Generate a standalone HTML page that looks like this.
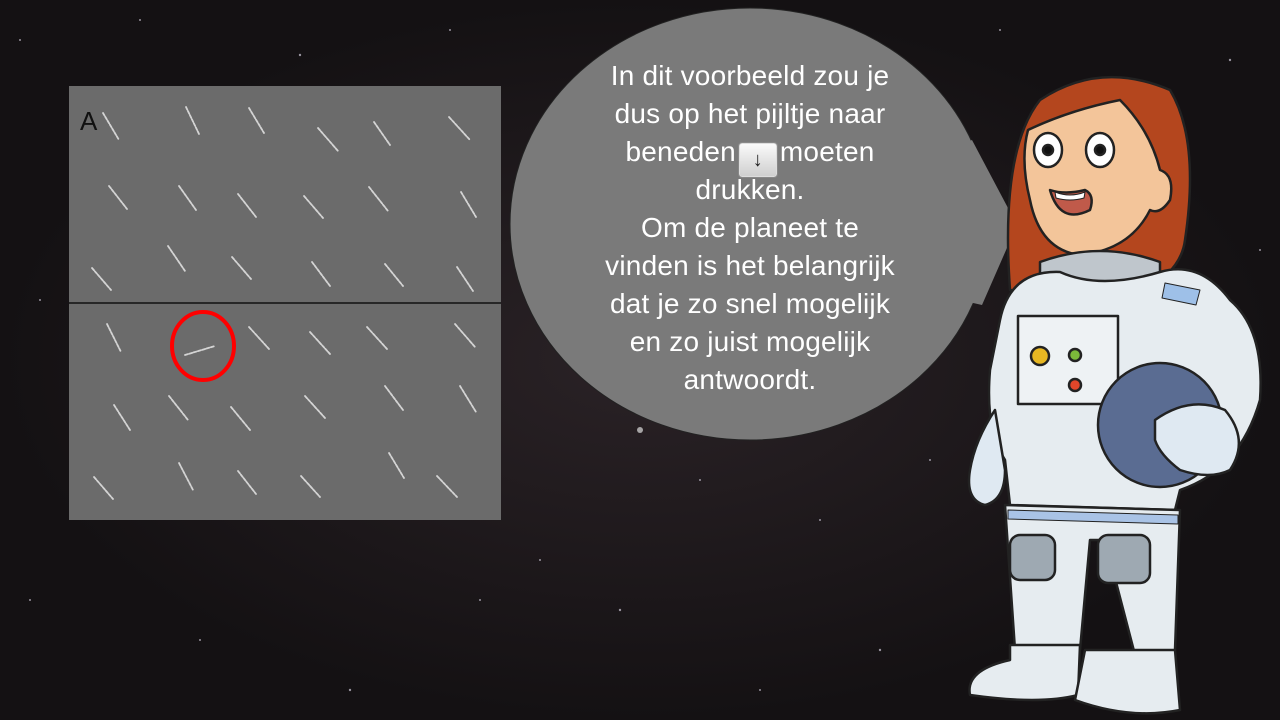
<!DOCTYPE html>
<html><head><meta charset="utf-8"><style>
body{margin:0;width:1280px;height:720px;overflow:hidden;background:#171315;position:relative;font-family:"Liberation Sans",sans-serif}
svg{position:absolute;left:0;top:0}
.t{position:absolute;left:540px;width:420px;top:57px;text-align:center;color:#fff;font-size:28px;line-height:38px;letter-spacing:0.2px}
.t div{height:38px;white-space:nowrap}
.key{display:inline-block;width:38px;height:34px;vertical-align:-5px;background:linear-gradient(#fafafa,#cfcfcf);border:1px solid #ddd;outline:1px solid #888;border-radius:3px;box-sizing:border-box;color:#222;font-size:20px;line-height:32px;margin:0 3px;font-weight:bold}
</style></head><body>
<svg width="1280" height="720">
<defs><radialGradient id="g" cx="0.5" cy="0.5" r="0.5"><stop offset="0" stop-color="#2a2226"/><stop offset="1" stop-color="#141113"/></radialGradient></defs>
<rect width="1280" height="720" fill="url(#g)"/>
<g fill="#cfc9d8" opacity="0.7">
<circle cx="20" cy="40" r="1"/><circle cx="140" cy="20" r="1"/><circle cx="300" cy="55" r="1.2"/><circle cx="450" cy="30" r="1"/><circle cx="540" cy="560" r="1"/><circle cx="620" cy="610" r="1.2"/><circle cx="700" cy="480" r="1"/><circle cx="820" cy="520" r="1"/><circle cx="880" cy="650" r="1.2"/><circle cx="30" cy="600" r="1"/><circle cx="200" cy="640" r="1"/><circle cx="350" cy="690" r="1.2"/><circle cx="480" cy="600" r="1"/><circle cx="760" cy="690" r="1"/><circle cx="930" cy="460" r="1"/><circle cx="1230" cy="60" r="1.2"/><circle cx="1260" cy="250" r="1"/><circle cx="40" cy="300" r="1"/><circle cx="530" cy="180" r="1"/><circle cx="1000" cy="30" r="1"/><circle cx="640" cy="430" r="3" fill="#ddd"/>
</g>
<rect x="69" y="86" width="432" height="434" fill="#6b6b6b"/>
<line x1="69" y1="303" x2="501" y2="303" stroke="#111" stroke-width="1.5"/>
<text x="80" y="130" font-size="26" fill="#111" font-family="Liberation Sans">A</text>
<g stroke="#d4d4d4" stroke-width="1.8" stroke-linecap="round" stroke-dasharray="3 1.5">
<path d="M103 113L119 140M186 107L199 134M249 108L264 133M318 128L338 151M374 122L390 145M449 117L470 140M109 186L127 209M179 186L196 210M238 194L256 217M304 196L323 218M369 187L388 211M461 192L476 217M92 268L111 290M168 246L185 271M232 257L251 279M312 262L330 286M385 264L403 286M457 267L473 291M107 324L121 352M185 355L215 346M249 327L269 349M310 332L330 354M367 327L387 349M455 324L475 347M114 405L130 430M169 396L188 420M231 407L250 430M305 396L325 418M385 386L403 410M460 386L476 412M94 477L113 499M179 463L193 490M238 471L256 494M301 476L320 497M389 453L404 478M437 476L457 497"/>
</g>
<ellipse cx="203" cy="346" rx="31" ry="34" fill="none" stroke="#f00" stroke-width="4"/>
<ellipse cx="750" cy="224" rx="240" ry="216" fill="#7a7a7a" stroke="#222" stroke-width="1"/>
<path d="M972 140 L1017 225 L982 305 L960 300 L960 145Z" fill="#7a7a7a"/>
<g stroke="#222" stroke-width="2.5" stroke-linejoin="round">
<path d="M1010 290 Q1000 150 1040 100 Q1100 60 1170 90 Q1200 140 1185 240 Q1180 280 1120 300 Z" fill="#b4461e"/>
<path d="M1028 130 Q1070 110 1120 100 Q1150 130 1160 170 Q1175 175 1170 200 Q1160 215 1150 210 Q1130 250 1080 255 Q1040 250 1030 200 Q1020 160 1028 130Z" fill="#f3c59a"/>
<ellipse cx="1048" cy="150" rx="14" ry="17" fill="#fff"/><ellipse cx="1100" cy="150" rx="14" ry="17" fill="#fff"/>
<circle cx="1048" cy="150" r="5" fill="#111"/><circle cx="1100" cy="150" r="5" fill="#111"/>
<path d="M1050 190 Q1060 225 1090 210 Q1095 195 1085 190 Q1065 195 1050 190Z" fill="#c05a4a"/>
<path d="M1055 192 Q1070 198 1085 192 L1084 198 Q1070 202 1056 198Z" fill="#fff" stroke-width="1"/>
<path d="M1040 262 Q1100 240 1160 262 L1160 285 Q1100 300 1040 285Z" fill="#bfc6cc"/>
<path d="M1000 320 Q1010 270 1060 272 Q1100 290 1160 272 Q1200 260 1230 300 Q1265 330 1260 400 Q1240 470 1180 490 L1175 510 L1010 505 L1005 460 Q985 430 990 370Z" fill="#e6ecf0"/>
<path d="M995 410 Q975 440 970 470 Q965 500 985 505 Q1005 500 1005 470 Z" fill="#dfe9f2"/>
<rect x="1018" y="316" width="100" height="88" fill="#eef2f4"/>
<circle cx="1040" cy="356" r="9" fill="#e7b722"/><circle cx="1075" cy="355" r="6" fill="#7cb83a"/><circle cx="1075" cy="385" r="6" fill="#e2462a"/>
<path d="M1005 505 L1180 510 L1175 650 L1135 655 L1105 540 L1090 540 L1080 650 L1015 650 Z" fill="#e6ecf0"/>
<rect x="1010" y="535" width="45" height="45" rx="10" fill="#9ea9b2"/><rect x="1098" y="535" width="52" height="48" rx="10" fill="#9ea9b2"/>
<path d="M1008 510 L1178 515 L1178 524 L1008 519Z" fill="#a9c3e6" stroke-width="1"/>
<path d="M1010 645 L1080 645 L1078 695 Q1040 705 970 695 Q965 670 1010 660Z" fill="#e6ecf0"/>
<path d="M1085 650 L1175 650 L1180 710 Q1130 720 1075 700Z" fill="#e6ecf0"/>
<circle cx="1160" cy="425" r="62" fill="#5a6c92"/>
<path d="M1155 420 Q1190 395 1225 410 Q1250 440 1230 470 Q1210 480 1180 470 Q1160 455 1155 440Z" fill="#dfe9f2"/>
<path d="M1165 283 L1200 290 L1196 305 L1162 298Z" fill="#9ec0e8" stroke-width="1"/>
</g>
</svg>
<div class="t"><div>In dit voorbeeld zou je</div><div>dus op het pijltje naar</div><div>beneden<span class="key">↓</span>moeten</div><div>drukken.</div><div>Om de planeet te</div><div>vinden is het belangrijk</div><div>dat je zo snel mogelijk</div><div>en zo juist mogelijk</div><div>antwoordt.</div></div>
</body></html>
